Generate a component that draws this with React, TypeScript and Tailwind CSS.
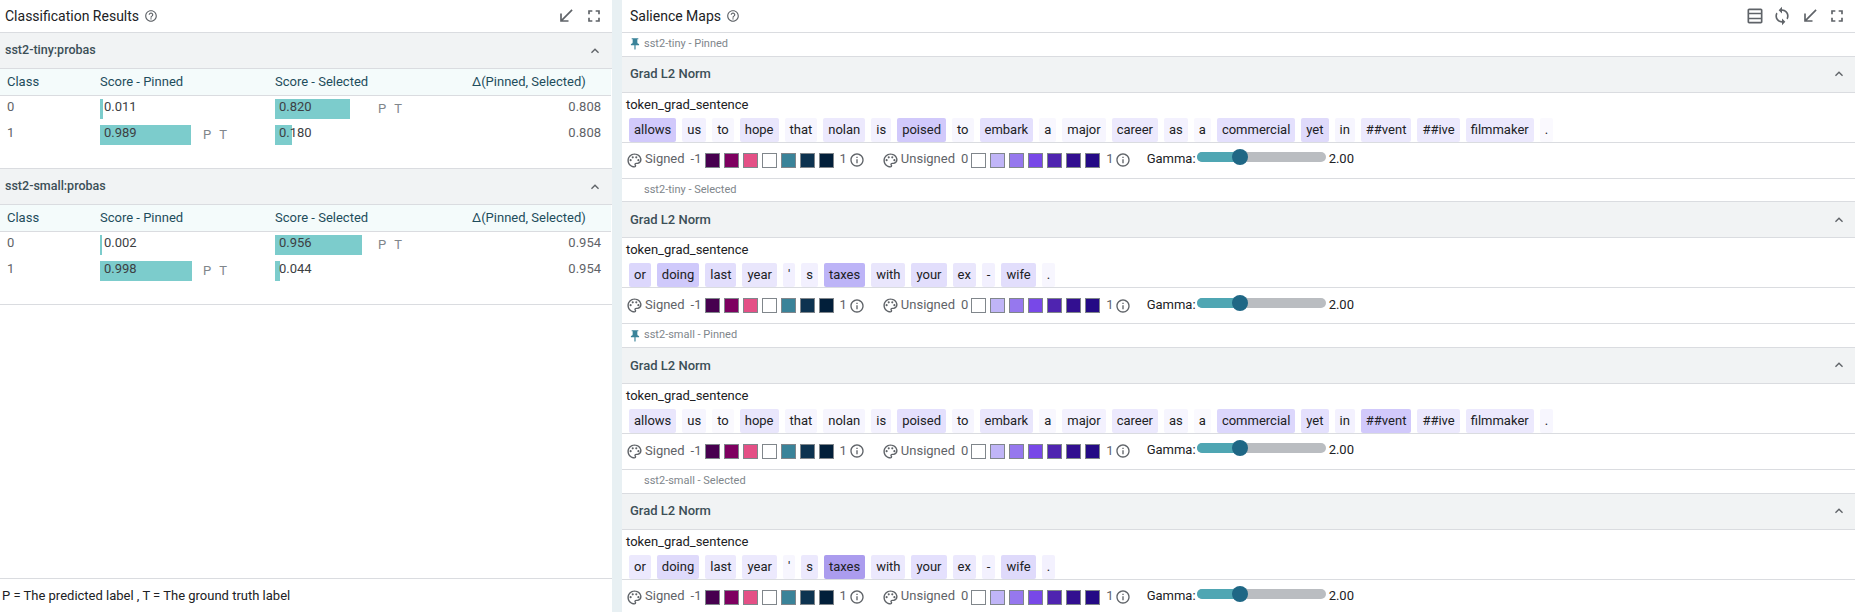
import { MdCallReceived, MdFullscreen, MdHelpOutline, MdInfoOutline, MdKeyboardArrowUp, MdOutlinePalette, MdOutlineTableRows, MdPushPin, MdSync } from "react-icons/md";

const SIGNED = ["#47004f", "#7e0060", "#e45086", "#ffffff", "#3a8399", "#0d3350", "#021f3a"];
const UNSIGNED = ["#ffffff", "#c0b5f7", "#9678ee", "#7848e8", "#4f24b0", "#320f90", "#240a85"];

type Tok = [string, string];

const SENT_A: Tok[] = [["allows", "#d1c9fb"], ["us", "#f2f0fe"], ["to", "#f7f6fe"], ["hope", "#e9e6fc"], ["that", "#f6f5fe"], ["nolan", "#ece9fd"], ["is", "#f3f1fe"], ["poised", "#d1c9fb"], ["to", "#f7f6fe"], ["embark", "#e4e0fd"], ["a", "#f8f7fe"], ["major", "#f6f5fe"], ["career", "#ece9fd"], ["as", "#f3f1fe"], ["a", "#f8f7fe"], ["commercial", "#e4e0fd"], ["yet", "#dfdafb"], ["in", "#f6f5fe"], ["##vent", "#ece9fd"], ["##ive", "#ece9fd"], ["filmmaker", "#ece9fd"], [".", "#faf9fe"]];
const SENT_B: Tok[] = [["or", "#dcd7fc"], ["doing", "#cfc9fb"], ["last", "#e2defc"], ["year", "#e9e6fc"], ["'", "#f2f0fe"], ["s", "#f2f0fe"], ["taxes", "#bdb4f7"], ["with", "#e9e6fc"], ["your", "#e2defc"], ["ex", "#e9e6fc"], ["-", "#f2f0fe"], ["wife", "#e2defc"], [".", "#f7f6fe"]];
const SENT_C: Tok[] = [["allows", "#e9e6fc"], ["us", "#f6f5fe"], ["to", "#faf9fe"], ["hope", "#e9e6fc"], ["that", "#f6f5fe"], ["nolan", "#f6f5fe"], ["is", "#f3f1fe"], ["poised", "#e4e0fd"], ["to", "#f6f5fe"], ["embark", "#e9e6fc"], ["a", "#f8f7fe"], ["major", "#f3f1fe"], ["career", "#ece9fd"], ["as", "#f6f5fe"], ["a", "#faf9fe"], ["commercial", "#dcd7fc"], ["yet", "#e4e0fd"], ["in", "#f3f1fe"], ["##vent", "#d1c9fb"], ["##ive", "#ece9fd"], ["filmmaker", "#ece9fd"], [".", "#f7f6fe"]];
const SENT_D: Tok[] = [["or", "#ece9fd"], ["doing", "#dfdafb"], ["last", "#ece9fd"], ["year", "#ece9fd"], ["'", "#f7f6fe"], ["s", "#ece9fd"], ["taxes", "#ab9cee"], ["with", "#ece9fd"], ["your", "#e4e0fd"], ["ex", "#ece9fd"], ["-", "#f3f1fe"], ["wife", "#dfdafb"], [".", "#f3f1fe"]];

const BLOCKS: { label: string; pinned: boolean; tokens: Tok[] }[] = [
  { label: "sst2-tiny - Pinned", pinned: true, tokens: SENT_A },
  { label: "sst2-tiny - Selected", pinned: false, tokens: SENT_B },
  { label: "sst2-small - Pinned", pinned: true, tokens: SENT_C },
  { label: "sst2-small - Selected", pinned: false, tokens: SENT_D },
];

const RESULTS = [
  {
    name: "sst2-tiny:probas",
    rows: [
      { cls: "0", pinned: "0.011", pinnedW: 3, selected: "0.820", selectedW: 75, delta: "0.808", pinP: false, selP: true },
      { cls: "1", pinned: "0.989", pinnedW: 91, selected: "0.180", selectedW: 17, delta: "0.808", pinP: true, selP: false },
    ],
  },
  {
    name: "sst2-small:probas",
    rows: [
      { cls: "0", pinned: "0.002", pinnedW: 2, selected: "0.956", selectedW: 87, delta: "0.954", pinP: false, selP: true },
      { cls: "1", pinned: "0.998", pinnedW: 92, selected: "0.044", selectedW: 5, delta: "0.954", pinP: true, selP: false },
    ],
  },
];

function ScoreCell({ value, width, marks }: { value: string; width: number; marks: boolean }) {
  return (
    <div className="flex items-start h-5">
      <div className="relative w-[103px] h-5 shrink-0">
        <div className="h-5 bg-[#7ccccc]" style={{ width }} />
        <span className="absolute left-1 top-0 text-[13px] leading-[15px] text-[#3c4043]">{value}</span>
      </div>
      {marks && (
        <div className="flex gap-[8px] pt-[1px] text-[13px] leading-[17px] text-[#80868b]">
          <span>P</span>
          <span>T</span>
        </div>
      )}
    </div>
  );
}

function ResultTable({ name, rows }: (typeof RESULTS)[number]) {
  return (
    <section className="h-[136px] border-b border-[#dadce0]">
      <div className="flex items-center justify-between h-9 pl-[5px] pr-[9px] bg-[#f1f3f4] border-b border-[#dadce0]">
        <span className="text-[12.5px] font-medium text-[#3c4f57]">{name}</span>
        <MdKeyboardArrowUp className="w-4 h-4 text-[#5f6368]" />
      </div>
      <div className="grid grid-cols-[100px_175px_197px_1fr] items-center h-[27px] pr-[11px] mr-[1px] bg-[#f4fbfb] border-b border-[#dadce0] text-[13px] text-[#1e4d5c]">
        <span className="pl-[7px]">Class</span>
        <span>Score - Pinned</span>
        <span>Score - Selected</span>
        <span>Δ(Pinned, Selected)</span>
      </div>
      <div className="flex flex-col gap-[6px] pt-[3px] pr-[11px]">
        {rows.map((row) => (
          <div key={row.cls} className="grid grid-cols-[100px_175px_197px_1fr] h-5 text-[13px] leading-[15px] text-[#5f6368]">
            <span className="pl-[7px]">{row.cls}</span>
            <ScoreCell value={row.pinned} width={row.pinnedW} marks={row.pinP} />
            <ScoreCell value={row.selected} width={row.selectedW} marks={row.selP} />
            <span className="text-right">{row.delta}</span>
          </div>
        ))}
      </div>
    </section>
  );
}

function Swatches({ colors }: { colors: string[] }) {
  return (
    <div className="flex gap-[4px]">
      {colors.map((c, i) => (
        <div key={i} className="w-[15px] h-[15px] border border-[#80868b]" style={{ backgroundColor: c }} />
      ))}
    </div>
  );
}

function Legend() {
  return (
    <div className="flex items-center h-9 pl-[4px] border-b border-[#dadce0] text-[13px] text-[#5f6368]">
      <MdOutlinePalette className="w-[17px] h-[17px] text-[#5f6368]" />
      <span className="ml-[2px] mb-[2px]">Signed</span>
      <span className="ml-[6px] mr-[3px] mb-[2px]">-1</span>
      <Swatches colors={SIGNED} />
      <span className="ml-[6px] mb-[2px]">1</span>
      <MdInfoOutline className="ml-[2px] w-4 h-4" />
      <MdOutlinePalette className="ml-[17px] w-[17px] h-[17px]" />
      <span className="ml-[2px] mb-[2px]">Unsigned</span>
      <span className="ml-[6px] mr-[3px] mb-[2px]">0</span>
      <Swatches colors={UNSIGNED} />
      <span className="ml-[6px] mb-[2px]">1</span>
      <MdInfoOutline className="ml-[1px] w-4 h-4" />
      <span className="ml-[16px] w-[50px] mb-[3px] text-[#202124]">Gamma:</span>
      <div className="relative w-[129px] h-[10px] mb-[6px] rounded-full bg-[#babdc1]">
        <div className="h-[10px] w-[43px] rounded-l-full bg-[#4fa6b3]" />
        <div className="absolute left-[35px] -top-[3px] w-4 h-4 rounded-full bg-[#1f6785]" />
      </div>
      <span className="ml-[3px] mb-[3px] text-[#202124]">2.00</span>
    </div>
  );
}

function SalienceBlock({ label, pinned, tokens }: (typeof BLOCKS)[number]) {
  return (
    <section>
      <div className="flex items-center h-[23.67px] pl-[6px] border-b border-[#dadce0] text-[11px] text-[#80868b]">
        {pinned ? <MdPushPin className="w-[14px] h-[14px] text-[#3a8399]" /> : <span className="w-[14px]" />}
        <span className="ml-[2px]">{label}</span>
      </div>
      <div className="flex items-center justify-between h-9 pl-[8px] pr-[8px] bg-[#f1f3f4] border-b border-[#dadce0]">
        <span className="text-[13px] font-medium text-[#3c4f57]">Grad L2 Norm</span>
        <MdKeyboardArrowUp className="w-4 h-4 text-[#5f6368]" />
      </div>
      <div className="h-[50px] border-b border-[#dadce0] px-[4px]">
        <div className="h-[25px] pt-[3px] text-[13px] leading-[17px] text-[#202124]">token_grad_sentence</div>
        <div className="flex gap-[6px] pl-[3px] h-6">
          {tokens.map(([word, bg], i) => (
            <span key={i} className="h-6 px-[5px] rounded-[2px] text-[13px] leading-6 text-[#202124]" style={{ backgroundColor: bg }}>
              {word}
            </span>
          ))}
        </div>
      </div>
      <Legend />
    </section>
  );
}

export default function App() {
  return (
    <div className="flex w-[1855px] h-[612px] overflow-hidden bg-white font-['Roboto',sans-serif]">
      <div className="flex flex-col w-[612px] shrink-0">
        <header className="flex items-center justify-between h-[33px] pl-[5px] pr-[8px] border-b border-[#dadce0] shrink-0">
          <div className="flex items-center gap-[5px] text-[14px] text-[#202124]">
            Classification Results
            <MdHelpOutline className="w-[14px] h-[14px] text-[#5f6368]" />
          </div>
          <div className="flex items-center gap-[8px] text-[#5f6368]">
            <MdCallReceived className="w-5 h-5" />
            <MdFullscreen className="w-5 h-5" />
          </div>
        </header>
        <div className="flex-1">
          {RESULTS.map((r) => (
            <ResultTable key={r.name} {...r} />
          ))}
        </div>
        <footer className="flex items-center h-[34px] pl-[2px] border-t border-[#dadce0] text-[13px] text-[#202124] shrink-0">
          P = The predicted label , T = The ground truth label
        </footer>
      </div>
      <div className="w-[10px] shrink-0 bg-[#e8f0f3]" />
      <div className="flex-1 min-w-0 overflow-hidden">
        <header className="flex items-center justify-between h-[33px] pl-[8px] pr-[8px] border-b border-[#dadce0]">
          <div className="flex items-center gap-[5px] text-[14px] text-[#202124]">
            Salience Maps
            <MdHelpOutline className="w-[14px] h-[14px] text-[#5f6368]" />
          </div>
          <div className="flex items-center gap-[7.5px] text-[#5f6368]">
            <MdOutlineTableRows className="w-5 h-5" />
            <MdSync className="w-5 h-5" />
            <MdCallReceived className="w-5 h-5" />
            <MdFullscreen className="w-5 h-5" />
          </div>
        </header>
        {BLOCKS.map((b) => (
          <SalienceBlock key={b.label} {...b} />
        ))}
      </div>
    </div>
  );
}
